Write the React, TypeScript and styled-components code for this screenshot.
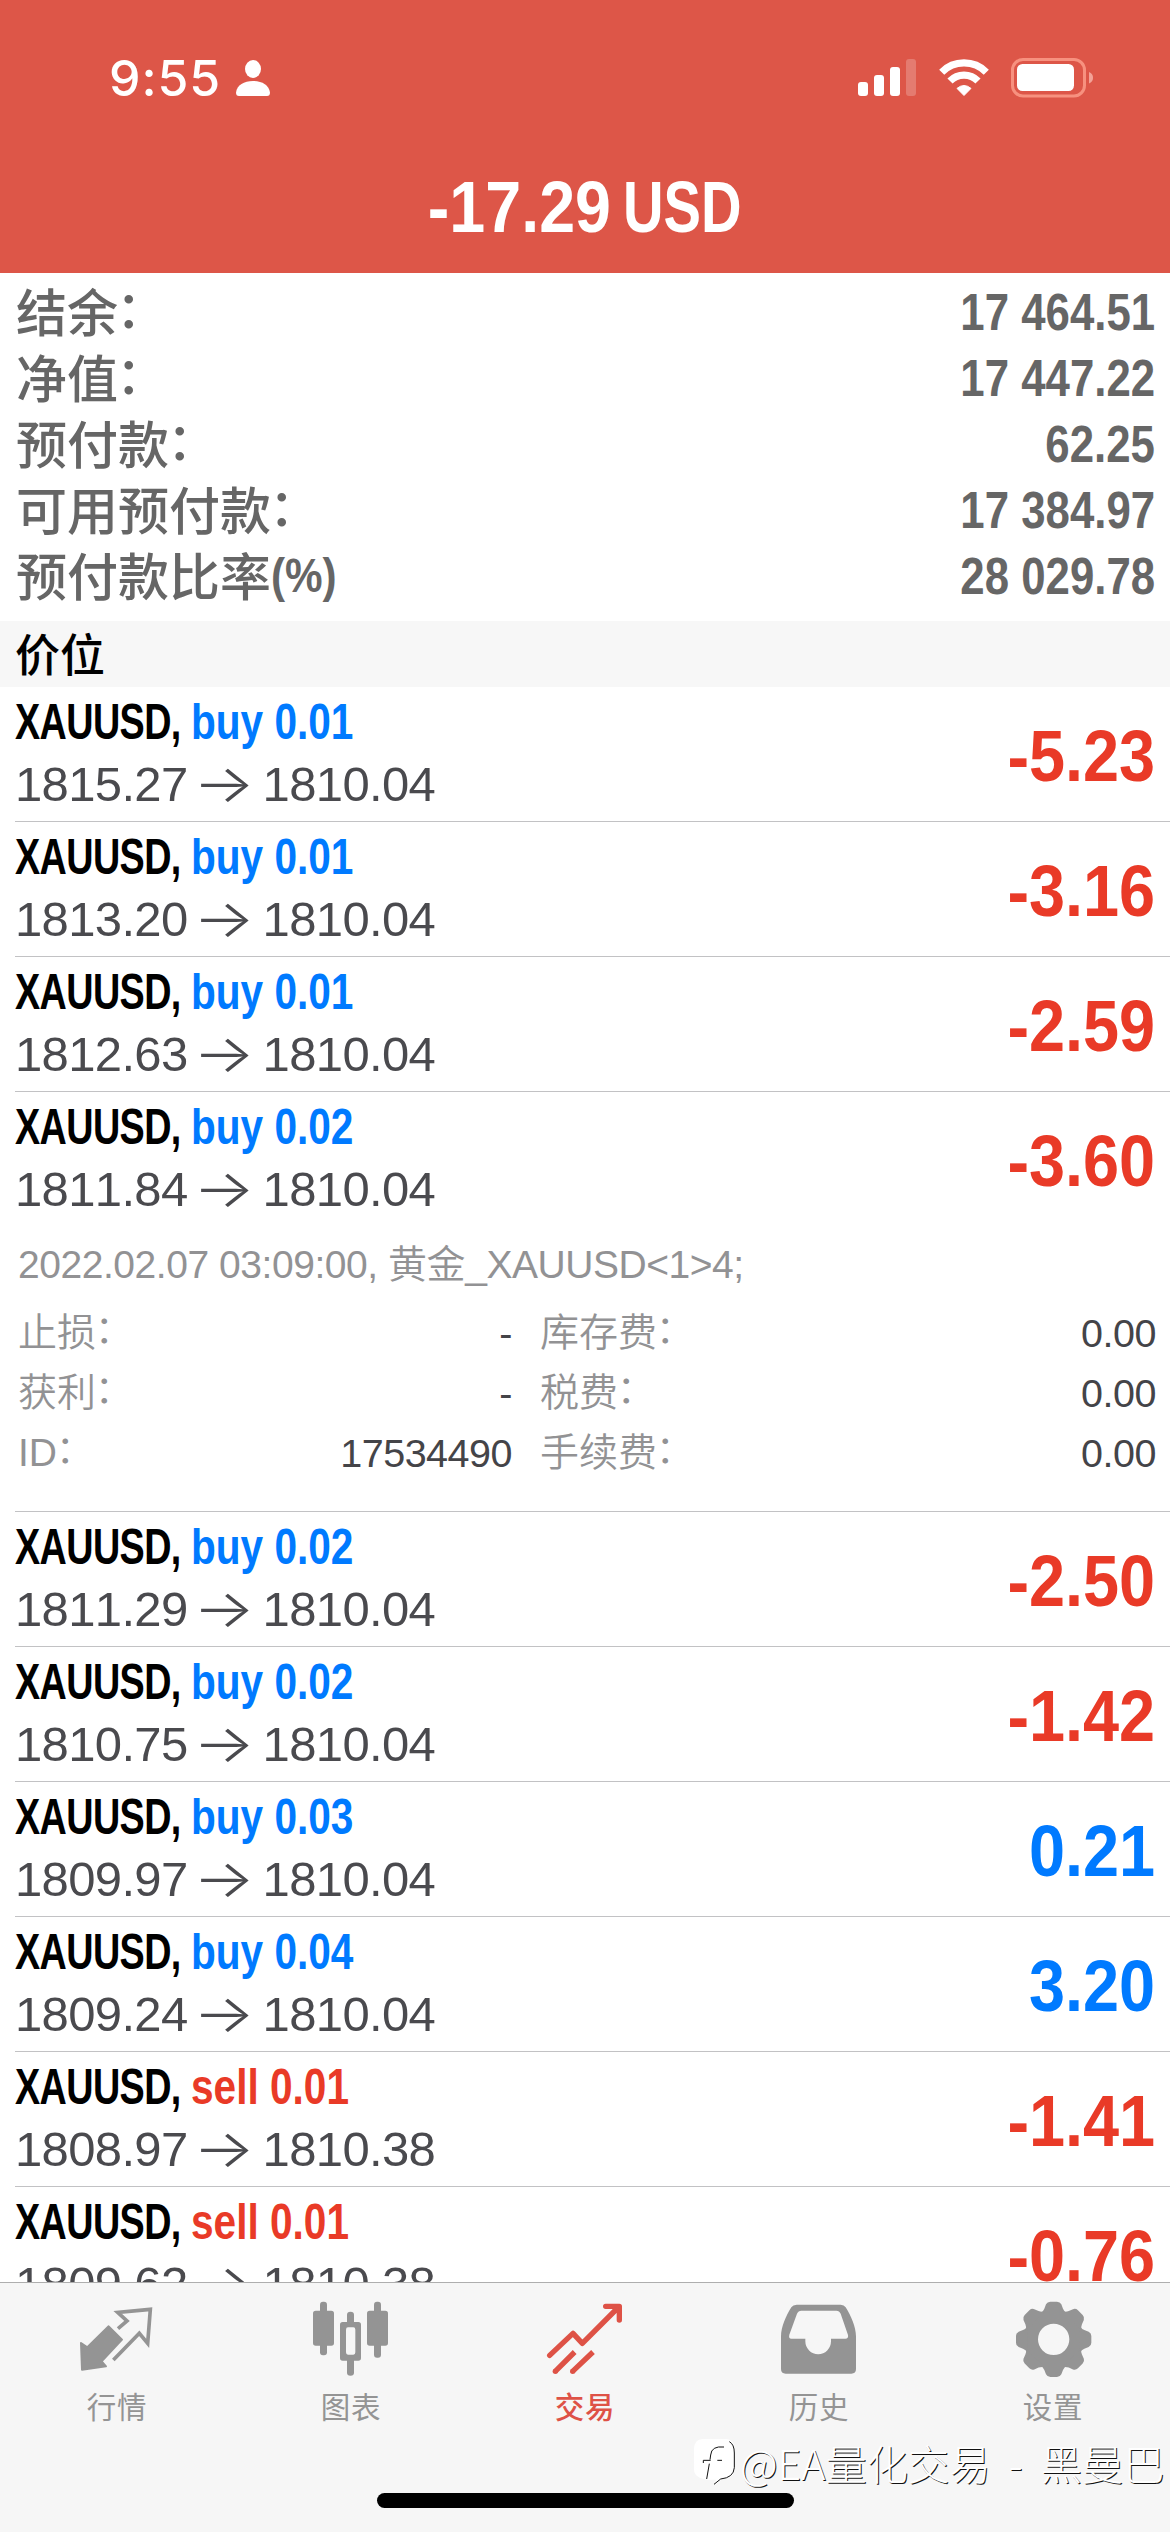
import React from "react";
import styled, { createGlobalStyle } from "styled-components";

const sans = `"Liberation Sans", "Noto Sans CJK SC", sans-serif`;
const cjk = `"Noto Sans CJK SC", sans-serif`;
const RED = "#e93a27";
const BLUE = "#007aff";

const Global = createGlobalStyle`
  * { box-sizing: border-box; }
  body { margin: 0; background: #fff; }
`;

const Screen = styled.div`
  position: relative;
  width: 1170px;
  height: 2532px;
  display: flex;
  flex-direction: column;
  overflow: hidden;
  background: #fff;
  font-family: ${sans};
  font-kerning: none;
`;

/* Text squeezed horizontally to the proportions of a condensed face */
const Condensed = styled.span<{ $x: number; $from?: string }>`
  display: inline-block;
  white-space: pre;
  transform: scaleX(${(p) => p.$x});
  transform-origin: ${(p) => p.$from ?? "left"} center;
`;

const Header = styled.header`
  flex: none;
  height: 273px;
  background: #dd5648;
  color: #fff;
  display: flex;
  flex-direction: column;
`;

const StatusBar = styled.div`
  height: 141px;
  padding: 15px 76px 0 109px;
  display: flex;
  align-items: center;
  justify-content: space-between;
`;

const StatusGroup = styled.div<{ $gap: number }>`
  display: flex;
  align-items: center;
  gap: ${(p) => p.$gap}px;
`;

const Clock = styled.span`
  font: 500 50px/60px Inter, sans-serif;
  letter-spacing: 0.9px;
`;

const Total = styled.h1`
  margin: 0;
  height: 132px;
  display: grid;
  grid-template-columns: 611px 1fr;
  column-gap: 12px;
  align-items: center;
  font-size: 73px;
  line-height: 84px;
  font-weight: 700;
`;

const TotalAmount = styled(Condensed)`
  justify-self: end;
`;

const TotalCurrency = styled(Condensed)`
  justify-self: start;
`;

const Summary = styled.section`
  flex: none;
  height: 348px;
  padding: 6px 15px 0 16px;
  color: #666;
`;

const SummaryRow = styled.div`
  height: 66px;
  display: flex;
  justify-content: space-between;
  align-items: center;
`;

const SummaryLabel = styled.span`
  height: 66px;
  font: 500 51px/62px ${cjk};
  display: flex;
`;

const Colon = styled.span`
  display: inline-block;
  transform: translate(-0.04em, -0.085em);
`;

const SummaryUnit = styled(Condensed)`
  font: 700 48px/66px ${sans};
`;

const SummaryValue = styled(Condensed)`
  font-size: 51.5px;
  line-height: 66px;
  font-weight: 700;
`;

const SectionTitle = styled.h2`
  margin: 0;
  flex: none;
  height: 66px;
  padding: 0 15px;
  background: #f7f7f7;
  color: #000;
  font: 500 45px/63px ${cjk};
`;

const List = styled.main`
  flex: 1;
  min-height: 0;
  overflow: hidden;
`;

const Position = styled.article`
  margin-left: 15px;
  border-bottom: 1px solid #c2c2c4;
`;

const PositionHead = styled.div`
  height: 134px;
  padding-right: 15px;
  display: flex;
  justify-content: space-between;
  align-items: center;
`;

const PositionInfo = styled.div`
  display: flex;
  flex-direction: column;
  padding-bottom: 3px;
`;

const Instrument = styled.div`
  display: grid;
  grid-template-columns: 176px 1fr;
  font-size: 49.5px;
  line-height: 63px;
  font-weight: 700;
`;

const Ticker = styled(Condensed)`
  justify-self: start;
  letter-spacing: -0.8px;
  color: #000;
`;

const Side = styled(Condensed)<{ $sell: boolean }>`
  justify-self: start;
  color: ${(p) => (p.$sell ? RED : BLUE)};
`;

const Prices = styled.div`
  display: flex;
  align-items: center;
  height: 63px;
  font-size: 49px;
  letter-spacing: -0.65px;
  color: #4a4a4e;
`;

const Arrow = styled.span`
  width: 75px;
  text-align: center;
  font: 300 52px/60px Inter, sans-serif;
  transform: translateX(-2px) scaleX(1.25);
`;

const Profit = styled(Condensed)<{ $gain: boolean }>`
  padding-top: 3px;
  font-size: 72px;
  line-height: 84px;
  font-weight: 700;
  color: ${(p) => (p.$gain ? BLUE : RED)};
`;

const Details = styled.div`
  height: 285px;
  padding: 0 14px 0 3px;
  font-size: 39.5px;
  color: #929294;
`;

const Comment = styled.div`
  height: 70px;
  margin-bottom: 7px;
  display: flex;
  align-items: center;
  white-space: pre;
  font-size: 39px;
  font-weight: 350;
  letter-spacing: -0.45px;
`;

const DetailGrid = styled.div`
  display: grid;
  grid-template-columns: 494px 1fr;
  column-gap: 28px;
  grid-auto-rows: 60px;
`;

const DetailCell = styled.div`
  display: flex;
  justify-content: space-between;
  align-items: center;
`;

const DetailLabel = styled.span`
  font: 350 39px/60px "Liberation Sans", ${cjk};
`;

const DetailValue = styled.span`
  color: #444448;
  letter-spacing: -0.5px;
`;

const TabBar = styled.nav`
  flex: none;
  height: 250px;
  border-top: 1px solid #aeaeae;
  background: #f6f6f6;
  display: grid;
  grid-template-columns: repeat(5, 1fr);
  padding-top: 15px;
`;

const Tab = styled.div<{ $active: boolean }>`
  display: flex;
  flex-direction: column;
  align-items: center;
  color: ${(p) => (p.$active ? "#de5246" : "#949494")};
`;

const TabIcon = styled.svg`
  width: 80px;
  height: 80px;
`;

const TabLabel = styled.span<{ $active: boolean }>`
  margin-top: 5px;
  font: ${(p) => (p.$active ? 500 : 400)} 29.5px/44px ${cjk};
  letter-spacing: 0.8px;
`;

const HomeIndicator = styled.div`
  position: absolute;
  left: 377px;
  top: 2493px;
  width: 417px;
  height: 15px;
  border-radius: 8px;
  background: #000;
`;

const Watermark = styled.div`
  position: absolute;
  left: 694px;
  top: 2432px;
  display: flex;
  align-items: center;
  gap: 4px;
  color: #fff;
  font: 300 41.3px/60px ${cjk};
  text-shadow: 1px 1px 0 #111;
  white-space: pre;
  word-spacing: 9px;
`;

const PersonIcon = () => (
  <svg width="34" height="38" viewBox="0 0 34 38" fill="#fff">
    <ellipse cx="17" cy="10" rx="8" ry="9" />
    <path d="M3 37Q0 37 0 33.5C1 26 8 22 17 22S33 26 34 33.5Q34 37 31 37Z" />
  </svg>
);

const SignalIcon = () => (
  <svg width="59" height="38" viewBox="0 0 59 38" fill="#fff">
    <rect x="0" y="23" width="10" height="14" rx="3" />
    <rect x="16" y="16" width="10" height="21" rx="3" />
    <rect x="32" y="8" width="10" height="29" rx="3" />
    <rect x="48" y="0" width="10" height="37" rx="3" opacity=".22" />
  </svg>
);

const WifiIcon = () => (
  <svg width="50" height="38" viewBox="0 0 50 38" fill="none" stroke="#fff" strokeWidth="7.2">
    <path d="M2.7 13.2A31.5 31.5 0 0 1 47.3 13.2" />
    <path d="M11 22A19.5 19.5 0 0 1 39 22" />
    <path d="M25 36.5L18 29.4Q25 23.6 32 29.4Z" fill="#fff" stroke="#fff" strokeWidth="1" strokeLinejoin="round" />
  </svg>
);

const BatteryIcon = () => (
  <svg width="83" height="40" viewBox="0 0 83 40">
    <rect x="1.5" y="1.5" width="72" height="36.5" rx="10.5" fill="none" stroke="#f7917f" strokeWidth="3" />
    <rect x="6" y="6" width="57" height="27" rx="5.5" fill="#fff" />
    <path d="M78 14Q82 15.5 82 19.8T78 25.5Z" fill="#f3a297" />
  </svg>
);

const QuotesIcon = () => (
  <TabIcon viewBox="231 355 240 240">
    <path d="M243 490L262 503L326 440L366 480L305 545L318 560L246 570Z" fill="currentColor" stroke="currentColor" strokeWidth="6" strokeLinejoin="round" />
    <path d="M340 541L418 461L443 491L451 389L353 398L381 424L354 447" fill="none" stroke="currentColor" strokeWidth="11" />
  </TabIcon>
);

const ChartIcon = () => (
  <TabIcon viewBox="933 355 240 240" fill="currentColor">
    <rect x="939" y="393" width="63" height="105" rx="8" />
    <rect x="960" y="366" width="21" height="161" rx="9" />
    <path fillRule="evenodd" d="M1028 427H1075Q1083 427 1083 435V535Q1083 543 1075 543H1028Q1020 543 1020 535V435Q1020 427 1028 427ZM1044 443Q1038 443 1038 450V518Q1038 525 1044 525H1060Q1066 525 1066 518V450Q1066 443 1060 443Z" />
    <path d="M1041 430V405Q1041 396 1051.500 396T1062 405V430ZM1041 540V579Q1041 588 1051.500 588T1062 579V540Z" />
    <rect x="1101" y="393" width="63" height="105" rx="8" />
    <rect x="1122" y="366" width="21" height="168" rx="9" />
  </TabIcon>
);

const TradeIcon = () => (
  <TabIcon viewBox="225 115 240 240" fill="none" stroke="currentColor" strokeWidth="16">
    <path d="M239 287L309 221L337 251L440 148" strokeLinecap="round" strokeLinejoin="round" />
    <path d="M407 140H448V181" strokeLinecap="round" strokeLinejoin="round" />
    <path d="M428 146L443 145V160Z" fill="currentColor" strokeWidth="4" />
    <circle cx="256" cy="335" r="8" fill="currentColor" stroke="none" />
    <circle cx="308" cy="335" r="8" fill="currentColor" stroke="none" />
    <path d="M255 336L314 277M307 336L369 277" />
  </TabIcon>
);

const HistoryIcon = () => (
  <TabIcon viewBox="237 355 240 240" fill="currentColor">
    <path
      fillRule="evenodd"
      d="M290 375H422Q432 375 437 383C453 408 468 442 468 470V568Q468 582 454 582H257Q243 582 243 568V470C243 442 258 408 274 383Q279 375 290 375ZM304 393Q295 393 291 402L268 465Q265 477 274 477H316V485A38.500 38.500 0 0 0 393 485V477H436Q446 477 444 466L422 402Q418 393 409 393Z"
    />
  </TabIcon>
);

const TEETH = [0, 45, 90, 135, 180, 225, 270, 315];

const SettingsIcon = () => (
  <TabIcon viewBox="-122 -124 240 240" fill="none" stroke="currentColor">
    <circle r="67" strokeWidth="40" />
    {TEETH.map((angle) => (
      <path
        key={angle}
        transform={`rotate(${angle})`}
        fill="currentColor"
        stroke="none"
        d="M-40 -78Q-31 -84 -28 -92L-23 -105Q-19 -113 -10 -113H10Q19 -113 23 -105L28 -92Q31 -84 40 -78Z"
      />
    ))}
  </TabIcon>
);

const BubbleLogo = () => (
  <svg width="42" height="46" viewBox="0 0 126 138">
    <path d="M26 0H96Q122 2 122 30V88Q122 118 84 121L62 138L66 122Q0 126 0 90V30Q0 2 26 0Z" fill="#fff" />
    <path d="M106 8Q121 16 121 42V86Q119 116 80 120L60 136M90 24Q52 20 50 48L48 62M28 72V64H50M70 64H84M46 74L38 120" fill="none" stroke="#111" strokeWidth="3" />
  </svg>
);

const summary: [string, string, string][] = [
  ["结余：", "", "17 464.51"],
  ["净值：", "", "17 447.22"],
  ["预付款：", "", "62.25"],
  ["可用预付款：", "", "17 384.97"],
  ["预付款比率", "(%)", "28 029.78"],
];

type Trade = { side: "buy" | "sell"; lots: string; open: string; now: string; profit: string; expanded?: boolean };

const trades: Trade[] = [
  { side: "buy", lots: "0.01", open: "1815.27", now: "1810.04", profit: "-5.23" },
  { side: "buy", lots: "0.01", open: "1813.20", now: "1810.04", profit: "-3.16" },
  { side: "buy", lots: "0.01", open: "1812.63", now: "1810.04", profit: "-2.59" },
  { side: "buy", lots: "0.02", open: "1811.84", now: "1810.04", profit: "-3.60", expanded: true },
  { side: "buy", lots: "0.02", open: "1811.29", now: "1810.04", profit: "-2.50" },
  { side: "buy", lots: "0.02", open: "1810.75", now: "1810.04", profit: "-1.42" },
  { side: "buy", lots: "0.03", open: "1809.97", now: "1810.04", profit: "0.21" },
  { side: "buy", lots: "0.04", open: "1809.24", now: "1810.04", profit: "3.20" },
  { side: "sell", lots: "0.01", open: "1808.97", now: "1810.38", profit: "-1.41" },
  { side: "sell", lots: "0.01", open: "1809.62", now: "1810.38", profit: "-0.76" },
];

const details = [
  ["止损：", "-"],
  ["库存费：", "0.00"],
  ["获利：", "-"],
  ["税费：", "0.00"],
  ["ID：", "17534490"],
  ["手续费：", "0.00"],
];

const tabs = [
  { label: "行情", Icon: QuotesIcon },
  { label: "图表", Icon: ChartIcon },
  { label: "交易", Icon: TradeIcon, active: true },
  { label: "历史", Icon: HistoryIcon },
  { label: "设置", Icon: SettingsIcon },
];

/* Label whose trailing full-width colon is raised to the optical middle */
const LabelText = ({ text }: { text: string }) =>
  text.endsWith("：") ? (
    <>
      {text.slice(0, -1)}
      <Colon>：</Colon>
    </>
  ) : (
    <>{text}</>
  );

const TradeRow = ({ trade }: { trade: Trade }) => (
  <Position>
    <PositionHead>
      <PositionInfo>
        <Instrument>
          <Ticker $x={0.763}>XAUUSD, </Ticker>
          <Side $x={0.82} $sell={trade.side === "sell"}>{`${trade.side} ${trade.lots}`}</Side>
        </Instrument>
        <Prices>
          {trade.open}
          <Arrow>→</Arrow>
          {trade.now}
        </Prices>
      </PositionInfo>
      <Profit $x={0.9} $from="right" $gain={!trade.profit.startsWith("-")}>
        {trade.profit}
      </Profit>
    </PositionHead>
    {trade.expanded && (
      <Details>
        <Comment>{"2022.02.07 03:09:00, 黄金_XAUUSD<1>4;"}</Comment>
        <DetailGrid>
          {details.map(([label, value]) => (
            <DetailCell key={label}>
              <DetailLabel>
                <LabelText text={label} />
              </DetailLabel>
              <DetailValue>{value}</DetailValue>
            </DetailCell>
          ))}
        </DetailGrid>
      </Details>
    )}
  </Position>
);

export default function App() {
  return (
    <Screen>
      <Global />
      <Header>
        <StatusBar>
          <StatusGroup $gap={15}>
            <Clock>9:55</Clock>
            <PersonIcon />
          </StatusGroup>
          <StatusGroup $gap={22}>
            <SignalIcon />
            <WifiIcon />
            <BatteryIcon />
          </StatusGroup>
        </StatusBar>
        <Total>
          <TotalAmount $x={0.885} $from="right">-17.29</TotalAmount>
          <TotalCurrency $x={0.77}>USD</TotalCurrency>
        </Total>
      </Header>
      <Summary>
        {summary.map(([label, unit, value]) => (
          <SummaryRow key={label}>
            <SummaryLabel>
              <LabelText text={label} />
              {unit && <SummaryUnit $x={0.88}>{unit}</SummaryUnit>}
            </SummaryLabel>
            <SummaryValue $x={0.85} $from="right">{value}</SummaryValue>
          </SummaryRow>
        ))}
      </Summary>
      <SectionTitle>价位</SectionTitle>
      <List>
        {trades.map((trade) => (
          <TradeRow key={trade.open} trade={trade} />
        ))}
      </List>
      <TabBar>
        {tabs.map(({ label, Icon, active }) => (
          <Tab key={label} $active={!!active}>
            <Icon />
            <TabLabel $active={!!active}>{label}</TabLabel>
          </Tab>
        ))}
      </TabBar>
      <HomeIndicator />
      <Watermark>
        <BubbleLogo />
        <span>@EA量化交易 - 黑曼巴</span>
      </Watermark>
    </Screen>
  );
}
